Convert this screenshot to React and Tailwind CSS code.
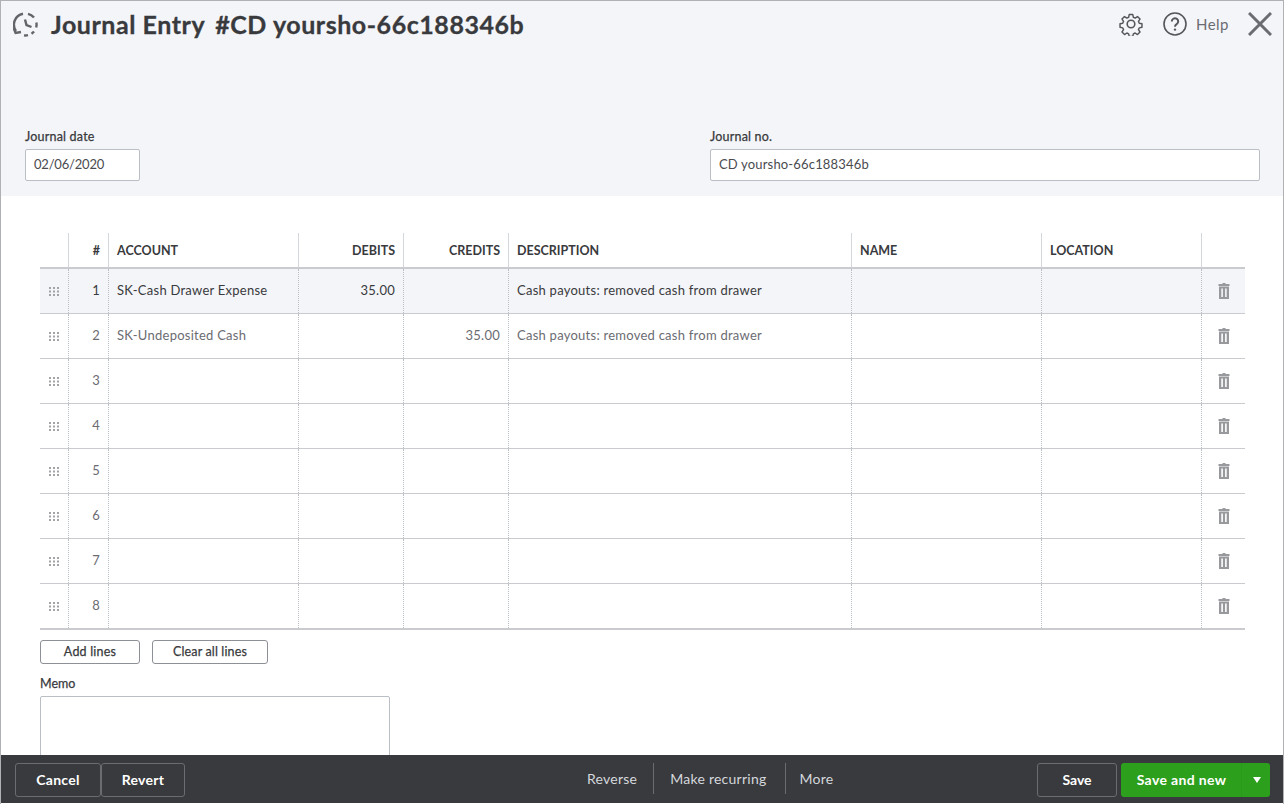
const columns = "grid grid-cols-[29px_40px_190px_105px_105px_343px_190px_160px_43px]";

const rows = [
  { num: 1, account: "SK-Cash Drawer Expense", debit: "35.00", description: "Cash payouts: removed cash from drawer", active: true },
  { num: 2, account: "SK-Undeposited Cash", credit: "35.00", description: "Cash payouts: removed cash from drawer" },
  { num: 3 },
  { num: 4 },
  { num: 5 },
  { num: 6 },
  { num: 7 },
  { num: 8 },
];

const HistoryIcon = () => (
  <svg width="26" height="26" viewBox="0 0 26 26" fill="none" stroke="#636469" strokeWidth="2.4">
    <path d="M3 19A11 11 0 0 1 10 1.8" />
    <path d="M15 1.8A11 11 0 0 1 21 5.5" />
    <path d="M23.4 10.5A11 11 0 0 1 23.2 15.5" />
    <path d="M21 19.5A11 11 0 0 1 18.5 21.7" />
    <path d="M15 23.2A11 11 0 0 1 11 23.4" />
    <path d="M.6 16l2 5 5.4-1" />
    <path d="M12 7.5l1.5 5.5 5 2" />
  </svg>
);

const GearIcon = () => (
  <svg width="24" height="24" viewBox="0 0 24 24" fill="none" stroke="#55565c" strokeWidth="1.6" strokeLinejoin="round">
    <path d="M10 1.5h4l.6 3 2 .9 2.6-1.7 2.8 2.8-1.7 2.6.9 2 3 .6v4l-3 .6-.9 2 1.7 2.6-2.8 2.8-2.6-1.7-2 .9-.6 3h-4l-.6-3-2-.9-2.6 1.7-2.8-2.8 1.7-2.6-.9-2-3-.6v-4l3-.6.9-2-1.7-2.6 2.8-2.8 2.6 1.7 2-.9z" transform="translate(1.2 1.2) scale(.9)" />
    <circle cx="12" cy="12" r="3.8" />
  </svg>
);

const HelpIcon = () => (
  <svg width="24" height="24" viewBox="0 0 24 24" fill="none" stroke="#55565c" strokeWidth="1.6">
    <circle cx="12" cy="12" r="11" />
    <path d="M8.8 9.5a3.2 3.2 0 1 1 4.9 2.7c-1.1.7-1.7 1.2-1.7 2.6" strokeWidth="2" />
    <circle cx="12" cy="17.6" r="1.2" fill="#55565c" stroke="none" />
  </svg>
);

const CloseIcon = () => (
  <svg width="24" height="24" viewBox="0 0 24 24" fill="none" stroke="#6b6c72" strokeWidth="3">
    <path d="M1 1l22 22M23 1L1 23" />
  </svg>
);

const TrashIcon = () => (
  <svg width="12" height="16" viewBox="0 0 12 16" fill="#98999d">
    <rect x="4.5" y="0" width="3" height="1.5" />
    <rect x="0.5" y="1" width="11" height="2" />
    <path d="M1 3.5h10V16H1zM3.3 5.5v8.5h1.6V5.5zM7.1 5.5v8.5h1.6V5.5z" fillRule="evenodd" />
  </svg>
);

const GripIcon = () => (
  <svg width="11" height="9" viewBox="0 0 11 9" fill="#a3a4a8">
    {[0, 4, 8].map((x) =>
      [0, 3.5, 7].map((y) => <rect key={`${x}-${y}`} x={x} y={y} width="2" height="2" />)
    )}
  </svg>
);

const HeaderCell = ({ children, className = "" }) => (
  <div className={`border-r border-[#d4d7dc] flex items-center px-2 pt-[3px] text-[12.5px] font-bold text-[#393a3d] ${className}`}>
    {children}
  </div>
);

const Cell = ({ children, className = "" }) => (
  <div className={`border-r border-dotted border-[#babec5] flex items-center px-2 text-[13px] tracking-[0.25px] ${className}`}>
    {children}
  </div>
);

const TableRow = ({ num, account, debit, credit, description, active }) => (
  <div className={`${columns} h-[45px] border-b border-[#c9cbcf] ${active ? "bg-[#f4f5f8] text-[#393a3d]" : "text-[#6b6c72]"}`}>
    <Cell className="justify-center pr-[7px]"><GripIcon /></Cell>
    <Cell className="justify-end">{num}</Cell>
    <Cell>{account}</Cell>
    <Cell className="justify-end">{debit}</Cell>
    <Cell className="justify-end">{credit}</Cell>
    <Cell>{description}</Cell>
    <Cell />
    <Cell />
    <div className="flex items-center justify-center pl-[1px]"><TrashIcon /></div>
  </div>
);

const DarkButton = ({ children, className = "" }) => (
  <button className={`h-[34px] rounded-[3px] border border-[#6b6c72] text-white text-[14px] font-bold ${className}`}>
    {children}
  </button>
);

const App = () => {
  return (
    <div
      className="w-[1284px] h-[804px] flex flex-col overflow-hidden bg-white border-x border-t border-[#b0b1b5] text-[#393a3d]"
      style={{ fontFamily: "Lato, 'Open Sans', sans-serif" }}
    >
      {/* Header */}
      <div className="h-[195px] shrink-0 bg-[#f4f5f8] flex flex-col justify-between px-6 pb-[15px]">
        <div className="flex items-start justify-between -ml-[12px] -mr-[13px] pt-[11px]">
          <div className="flex items-center gap-[12px]">
            <HistoryIcon />
            <h1 className="-mt-[2px] text-[25px] leading-[26px] font-bold tracking-[0.55px] text-[#393a3d] [-webkit-text-stroke:0.3px_#393a3d]">
              Journal Entry <span className="ml-[4px]">#CD yoursho-66c188346b</span>
            </h1>
          </div>
          <div className="flex items-center">
            <GearIcon />
            <div className="ml-[20px]"><HelpIcon /></div>
            <span className="ml-[9px] text-[15px] tracking-[0.5px] text-[#6b6c72]">Help</span>
            <div className="ml-[19px]"><CloseIcon /></div>
          </div>
        </div>
        <div className="flex">
          <div className="w-[685px] shrink-0">
            <label className="block text-[12.5px] tracking-[0.2px] leading-4 mb-[4px] [-webkit-text-stroke:0.25px_#393a3d]">Journal date</label>
            <div className="w-[115px] h-[32px] bg-white border border-[#babec5] rounded-[2px] flex items-center px-2 text-[13px] tracking-[-0.2px] text-[#4a4b4f]">02/06/2020</div>
          </div>
          <div className="flex-1">
            <label className="block text-[12.5px] tracking-[0.2px] leading-4 mb-[4px] [-webkit-text-stroke:0.25px_#393a3d]">Journal no.</label>
            <div className="w-[550px] h-[32px] bg-white border border-[#babec5] rounded-[2px] flex items-center px-2 text-[13px] tracking-[0.17px] text-[#4a4b4f]">CD yoursho-66c188346b</div>
          </div>
        </div>
      </div>

      {/* Table and memo */}
      <div className="flex-1 min-h-0 overflow-hidden pl-[39px] pt-[37px]">
        <div className="w-[1205px]">
          <div className={`${columns} h-[36px] border-b-[2px] border-[#c9cbcf]`}>
            <HeaderCell />
            <HeaderCell className="justify-end">#</HeaderCell>
            <HeaderCell>ACCOUNT</HeaderCell>
            <HeaderCell className="justify-end">DEBITS</HeaderCell>
            <HeaderCell className="justify-end">CREDITS</HeaderCell>
            <HeaderCell>DESCRIPTION</HeaderCell>
            <HeaderCell>NAME</HeaderCell>
            <HeaderCell>LOCATION</HeaderCell>
            <div />
          </div>
          {rows.map((row) => (
            <TableRow key={row.num} {...row} />
          ))}
        </div>
        <div className="w-[1205px] border-t border-[#c9cbcf]" />
        <div className="flex gap-3 mt-[10px]">
          <button className="w-[100px] h-[24px] pt-px rounded-[3px] border border-[#8d9096] text-[12.5px] tracking-[0.2px] text-[#393a3d] [-webkit-text-stroke:0.25px_#393a3d]">Add lines</button>
          <button className="w-[116px] h-[24px] pt-px rounded-[3px] border border-[#8d9096] text-[12.5px] tracking-[0.15px] text-[#393a3d] [-webkit-text-stroke:0.25px_#393a3d]">Clear all lines</button>
        </div>
        <label className="block mt-[12px] mb-[4px] text-[12.5px] leading-4 [-webkit-text-stroke:0.25px_#393a3d]">Memo</label>
        <div className="w-[350px] h-[100px] border border-[#babec5] rounded-[2px]" />
      </div>

      {/* Footer */}
      <div className="h-[48px] shrink-0 bg-[#393a3d] flex items-center pl-[14px] pr-[13px] pt-px mb-px">
        <div className="flex">
          <DarkButton className="w-[86px] tracking-[0.3px]">Cancel</DarkButton>
          <DarkButton className="w-[84px] tracking-[0.3px]">Revert</DarkButton>
        </div>
        <div className="ml-[385px] -mt-[2px] flex items-center text-[14px] tracking-[0.25px] text-[#d4d7dc]">
          <span className="pl-[17px] pr-[16px]">Reverse</span>
          <span className="w-px h-[31px] bg-[#6b6c72]" />
          <span className="pl-[16px] pr-[18px]">Make recurring</span>
          <span className="w-px h-[31px] bg-[#6b6c72]" />
          <span className="pl-[14px]">More</span>
        </div>
        <div className="ml-auto flex gap-[4px]">
          <DarkButton className="w-[80px]">Save</DarkButton>
          <div className="h-[34px] w-[149px] flex rounded-[3px] bg-[#2ca01c] text-white text-[14px] font-bold">
            <button className="w-[121px] pl-px tracking-[0.35px] border-r border-[#2a9a1b]">Save and new</button>
            <button className="flex-1 flex items-center justify-center pl-px">
              <span className="w-0 h-0 border-x-[4.5px] border-x-transparent border-t-[6px] border-t-white" />
            </button>
          </div>
        </div>
      </div>
    </div>
  );
};

export default App;
